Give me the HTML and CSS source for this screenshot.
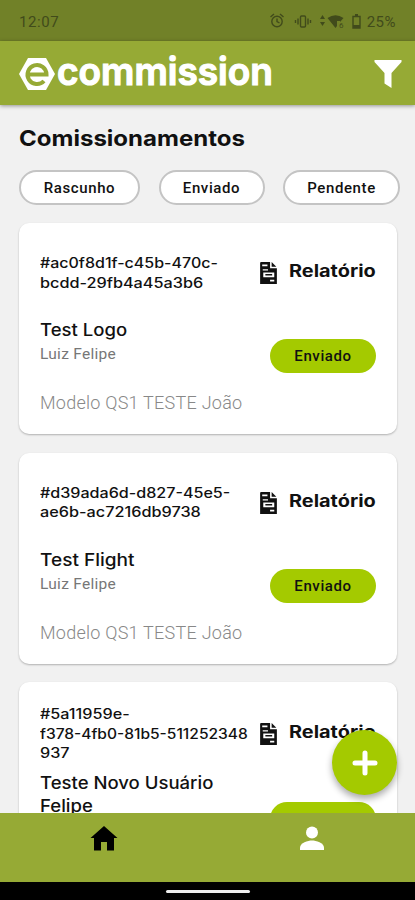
FILE: index.html
```html
<!DOCTYPE html>
<html lang="pt-BR">
<head>
<meta charset="utf-8">
<title>Comissionamentos</title>
<link rel="stylesheet" href="styles.css">
</head>
<body>
<svg class="defs" width="0" height="0">
  <symbol id="report" viewBox="0 0 16 21">
    <path fill="#111" fill-rule="evenodd" d="M1 0H9.500V6H16V21H0V1Q0 0 1 0ZM2 2.500V4H7V2.500ZM2.500 7V8H7.500V7ZM3 10V14.500H13.500V10ZM9.500 17V18.500H13.500V17Z"/>
    <path fill="#111" d="M11 0 15.500 4.500H11ZM5 11.500H11.500V13H5Z"/>
  </symbol>
</svg>
<div class="app">
  <div class="status">
    <span class="clock">12:07</span>
    <svg class="status-icons" width="96" height="20" viewBox="0 0 96 20" fill="none" stroke="#414b1b" stroke-width="1.400">
      <circle cx="8" cy="10.500" r="5.200"/><path d="M8 7.500V10.500L10.500 12M1.500 6 5 3M11 3 14.500 6"/>
      <rect x="31.500" y="5" width="5" height="11" rx="1"/><path d="M29 7.500V13.500M39 7.500V13.500M26.500 9V12M41.500 9V12"/>
      <path fill="#414b1b" stroke="none" d="M53.500 4 56 8H51ZM51 11H56L53.500 15ZM58.500 7Q66.500 1.500 74.500 7L71 11V10H68V15L66.500 17Z"/>
      <text x="70" y="17" font-family="Roboto" font-size="8" fill="#414b1b" stroke="none">6</text>
      <path d="M84 5.500H91V17H84Z"/><path fill="#414b1b" stroke="none" d="M86 3H89V5H86ZM84 14H91V17H84Z"/>
    </svg>
    <span class="charge">25%</span>
  </div>
  <header class="header">
    <svg class="logo" width="256" height="40" viewBox="0 0 256 40">
      <path fill="#fff" d="M9 4H27L36 20 27 36H9L0 20Z"/>
      <path fill="none" stroke="#96aa35" stroke-width="4" d="M8.500 20.500H27.500A9.500 9.500 0 1 0 25 27"/>
      <text x="38" y="30.800" textLength="216" lengthAdjust="spacingAndGlyphs">commission</text>
    </svg>
    <svg class="filter" width="28" height="28" viewBox="0 0 28 28"><path fill="#fff" d="M.5 0H27.500V2L17.500 13V28L10.500 23.500V13L.5 2Z"/></svg>
  </header>
  <main class="content">
    <h1><span class="wide title">Comissionamentos</span></h1>
    <div class="filters"><button>Rascunho</button><button class="sent">Enviado</button><button class="pending">Pendente</button></div>
    <article class="card">
      <div class="info">
        <p class="code"><span class="wide c1">#ac0f8d1f-c45b-470c-</span><span class="wide c2">bcdd-29fb4a45a3b6</span></p>
        <h2><span class="wide n1">Test Logo</span></h2><p class="person">Luiz Felipe</p><p class="model">Modelo QS1 TESTE João</p>
      </div>
      <div class="actions"><div class="report"><svg width="17" height="22"><use href="#report"/></svg><span class="wide rel">Relatório</span></div><div class="badge">Enviado</div></div>
    </article>
    <article class="card">
      <div class="info">
        <p class="code"><span class="wide c3">#d39ada6d-d827-45e5-</span><span class="wide c4">ae6b-ac7216db9738</span></p>
        <h2><span class="wide n2">Test Flight</span></h2><p class="person">Luiz Felipe</p><p class="model">Modelo QS1 TESTE João</p>
      </div>
      <div class="actions"><div class="report"><svg width="17" height="22"><use href="#report"/></svg><span class="wide rel">Relatório</span></div><div class="badge">Enviado</div></div>
    </article>
    <article class="card third">
      <div class="info">
        <p class="code"><span class="wide c5">#5a11959e-</span><span class="wide c6">f378-4fb0-81b5-511252348</span><span class="wide c7">937</span></p>
        <h2><span class="wide n3">Teste Novo Usuário</span><span class="wide n4">Felipe</span></h2>
      </div>
      <div class="actions"><div class="report"><svg width="17" height="22"><use href="#report"/></svg><span class="wide rel">Relatório</span></div><div class="badge"></div></div>
    </article>
  </main>
  <button class="fab" aria-label="Adicionar"><svg width="26" height="26" viewBox="0 0 26 26"><path stroke="#fff" stroke-width="5" stroke-linecap="round" d="M13 3V23M3 13H23"/></svg></button>
  <nav class="nav">
    <svg width="28" height="26" viewBox="0 0 28 26"><path d="M14 0 27.500 12H24V24.500H17V16H11V24.500H4V12H.5Z"/></svg>
    <svg width="26" height="26" viewBox="0 0 26 26" fill="#fff"><circle cx="13" cy="6.500" r="6"/><path d="M1 24V21.500C1 17 9 14.500 13 14.500S25 17 25 21.500V24Z"/></svg>
  </nav>
  <div class="gesture"><i></i></div>
</div>
</body>
</html>
```
FILE: styles.css
```css
* { box-sizing: border-box; margin: 0; padding: 0; }
body { background: #f1f1f1; color: #111; font-family: Inter, sans-serif; }
.defs { position: absolute; }
.app { position: relative; width: 415px; height: 900px; overflow: hidden; display: flex; flex-direction: column; }
.status { flex: 0 0 41px; background: #718128; color: #414b1b; display: flex; align-items: center; padding: 2px 19px 0 19px; font: 15px Roboto, sans-serif; }
.clock { letter-spacing: .6px; }
.status-icons { margin: -1px 0 0 auto; }
.charge { letter-spacing: .5px; margin-left: 2px; }
.header { z-index: 1; flex: 0 0 64px; background: #96aa35; box-shadow: 0 1px 4px #0006; display: flex; align-items: center; justify-content: space-between; padding: 0 13px 0 19px; }
.logo { margin-top: 2px; overflow: visible; }
.logo text { font: 600 38px Inter, sans-serif; fill: #fff; stroke: #fff; stroke-width: 1.200px; }
.filter { margin-top: 2px; }
.content { flex: 1; min-height: 0; overflow: hidden; padding: 19px 18px 0 19px; }
.wide { display: block; width: max-content; white-space: nowrap; transform-origin: left; }
h1 { font-size: 22px; line-height: 28px; font-weight: 700; }
.filters { display: flex; justify-content: space-between; margin: 18px -3px 18px 0; }
.filters button { width: 121px; height: 35px; border: 2px solid #c4c4c4; border-radius: 18px; background: #fff; color: #111; font: 500 15px Roboto, sans-serif; letter-spacing: .6px; }
.filters .sent { width: 106px; }
.filters .pending { width: 117px; }
.card { height: 211px; margin-bottom: 18.500px; background: #fff; border-radius: 10px; box-shadow: 0 1px 2px #0004; display: flex; justify-content: space-between; padding: 30px 21px 0 21px; }
.info { width: 215px; }
.code { font-size: 14px; font-weight: 500; line-height: 19.500px; }
h2 { font-size: 17px; font-weight: 500; line-height: 23px; margin-top: 27px; }
.person { font: 15.500px/24px Roboto, sans-serif; color: #777; letter-spacing: .28px; }
.model { font: 300 18px/26px Roboto, sans-serif; color: #888; letter-spacing: .25px; margin-top: 24px; white-space: nowrap; }
.actions { width: 117px; display: flex; flex-direction: column; align-items: flex-end; }
.report { width: 116px; height: 36px; display: flex; align-items: center; gap: 12px; font-size: 17px; font-weight: 700; }
.report svg { flex: none; margin-top: 4px; }
.report .rel { transform: scaleX(1.17); }
.badge { width: 106px; height: 34px; margin-top: 50px; border-radius: 17px; background: #a4ca00; font: 500 15px/35px Roboto, sans-serif; letter-spacing: .6px; text-align: center; }
.third { padding-top: 22px; }
.third h2 { margin-top: 9px; }
.third .report { margin-top: 10px; }
.third .badge { margin-top: 52px; }
.fab { position: absolute; left: 332px; top: 730px; width: 65px; height: 65px; border: 0; border-radius: 50%; background: #a4ca00; box-shadow: 0 4px 7px #0005; display: grid; place-items: center; }
.nav { flex: 0 0 69px; background: #96aa35; display: flex; justify-content: space-around; padding-top: 13px; }
.gesture { flex: 0 0 18px; background: #000; display: grid; place-items: center; }
.gesture i { width: 84px; height: 3px; border-radius: 2px; background: #eee; }
.title { transform: scaleX(1.092); }
.c1 { transform: scaleX(1.143); }
.c2, .c4 { transform: scaleX(1.16); }
.c3 { transform: scaleX(1.15); }
.c5, .c7 { transform: scaleX(1.155); }
.c6 { transform: scaleX(1.11); }
.n1, .n3, .n4 { transform: scaleX(1.09); }
.n2 { transform: scaleX(1.12); }
```
